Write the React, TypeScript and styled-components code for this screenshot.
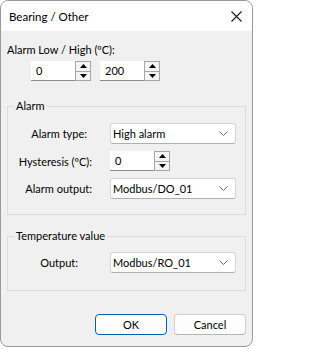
import React from "react";
import styled, { createGlobalStyle } from "styled-components";

const GlobalStyle = createGlobalStyle`
    html, body {
        margin: 0;
        padding: 0;
        background: #ffffff;
    }
    body {
        font-family: Lato, "Liberation Sans", sans-serif;
        font-size: 11px;
        color: #000000;
    }
`;

interface SpinBoxProps {
    value: string;
    width?: number;
}

const SpinBox: React.FC<SpinBoxProps> = ({ value, width = 44 }) => (
    <SpinWrap>
        <SpinField style={{ width }}>{value}</SpinField>
        <Spinner>
            <SpinHalf>
                <Arrow viewBox="0 0 7 4">
                    <path d="M3.5 0 L7 4 L0 4 Z" />
                </Arrow>
            </SpinHalf>
            <SpinHalf>
                <Arrow viewBox="0 0 7 4">
                    <path d="M0 0 L7 0 L3.5 4 Z" />
                </Arrow>
            </SpinHalf>
        </Spinner>
    </SpinWrap>
);

const Combo: React.FC<{ value: string }> = ({ value }) => (
    <ComboBox>
        <span>{value}</span>
        <svg width="9" height="5" viewBox="0 0 9 5">
            <path d="M0.5 0.5 L4.5 4.5 L8.5 0.5" fill="none" stroke="#6a6a6a" strokeWidth="1" />
        </svg>
    </ComboBox>
);

const App: React.FC = () => {
    return (
        <>
            <GlobalStyle />
            <Window>
                <TitleBar>
                    <Title>Bearing / Other</Title>
                    <CloseButton>
                        <svg width="11" height="11" viewBox="0 0 11 11">
                            <path d="M0.5 0.5 L10.5 10.5 M10.5 0.5 L0.5 10.5" stroke="#1a1a1a" strokeWidth="1.1" />
                        </svg>
                    </CloseButton>
                </TitleBar>
                <Body>
                    <Heading>Alarm Low / High (ºC):</Heading>
                    <SpinRow>
                        <SpinBox value="0" />
                        <SpinBox value="200" />
                    </SpinRow>

                    <Group $top={9} $bottom={15}>
                        <Legend>Alarm</Legend>
                        <FormGrid>
                            <FieldLabel $pad={5}>Alarm type:</FieldLabel>
                            <Combo value="High alarm" />
                            <FieldLabel>Hysteresis (ºC):</FieldLabel>
                            <SpinBox value="0" />
                            <FieldLabel>Alarm output:</FieldLabel>
                            <Combo value="Modbus/DO_01" />
                        </FormGrid>
                    </Group>

                    <Group $top={8} $bottom={17} $gap={13}>
                        <Legend>Temperature value</Legend>
                        <FormGrid>
                            <FieldLabel $pad={14}>Output:</FieldLabel>
                            <Combo value="Modbus/RO_01" />
                        </FormGrid>
                    </Group>

                    <ButtonRow>
                        <DialogButton $primary>OK</DialogButton>
                        <DialogButton>Cancel</DialogButton>
                    </ButtonRow>
                </Body>
            </Window>
        </>
    );
};

export default App;

// styles
const Window = styled.div`
    width: 253px;
    height: 347px;
    box-sizing: border-box;
    border: 1px solid #9a9a9a;
    border-radius: 8px;
    overflow: hidden;
    display: flex;
    flex-direction: column;
    background: #f0f0f0;
`;

const TitleBar = styled.div`
    height: 30px;
    background: #ffffff;
    display: flex;
    align-items: center;
    justify-content: space-between;
    padding-left: 8px;
`;

const Title = styled.span`
    font-size: 11.5px;
    line-height: 16px;
    margin-top: 1px;
`;

const CloseButton = styled.div`
    width: 31px;
    height: 30px;
    display: flex;
    align-items: center;
    justify-content: center;
`;

const Body = styled.div`
    flex: 1;
    display: flex;
    flex-direction: column;
    padding: 11px 6px 0 6px;
`;

const Heading = styled.div`
    line-height: 16px;
`;

const SpinRow = styled.div`
    display: flex;
    gap: 9px;
    margin: 3px 0 0 24px;
`;

const SpinWrap = styled.div`
    display: flex;
    height: 20px;
`;

const SpinField = styled.div`
    box-sizing: border-box;
    height: 20px;
    background: #ffffff;
    border-bottom: 1px solid #8d8d8d;
    padding-left: 5px;
    line-height: 19px;
`;

const Spinner = styled.div`
    width: 16px;
    box-sizing: border-box;
    border: 1px solid #a6a6a6;
    display: flex;
    flex-direction: column;
    background: #a6a6a6;
    gap: 1px;
`;

const SpinHalf = styled.div`
    flex: 1;
    background: #f4f4f4;
    display: flex;
    align-items: center;
    justify-content: center;
`;

const Arrow = styled.svg`
    width: 7px;
    height: 4px;
    fill: #000000;
`;

const Group = styled.fieldset<{ $top: number; $bottom: number; $gap?: number }>`
    margin: ${(p) => p.$gap ?? 17}px 0 0 0;
    padding: ${(p) => p.$top}px 9px ${(p) => p.$bottom}px 0;
    border: 1px solid #dcdcdc;
    min-width: 0;
`;

const Legend = styled.legend`
    margin-left: 6px;
    padding: 0 2px;
    line-height: 16px;
`;

const FormGrid = styled.div`
    display: grid;
    grid-template-columns: 84px 126px;
    column-gap: 18px;
    row-gap: 7px;
    align-items: center;
`;

const FieldLabel = styled.span<{ $pad?: number }>`
    text-align: right;
    padding-right: ${(p) => p.$pad ?? 0}px;
    white-space: nowrap;
`;

const ComboBox = styled.div`
    box-sizing: border-box;
    height: 21px;
    background: #ffffff;
    border: 1px solid #d5d5d5;
    border-bottom-color: #b0b0b0;
    border-radius: 3px;
    display: flex;
    align-items: center;
    justify-content: space-between;
    padding: 0 7px 0 2px;
`;

const ButtonRow = styled.div`
    display: flex;
    justify-content: flex-end;
    gap: 7px;
    margin-top: 23px;
`;

const DialogButton = styled.div<{ $primary?: boolean }>`
    box-sizing: border-box;
    width: 72px;
    height: 21px;
    background: #fdfdfd;
    border: 1px solid ${(p) => (p.$primary ? "#005fb8" : "#d0d0d0")};
    border-bottom-color: ${(p) => (p.$primary ? "#005fb8" : "#b5b5b5")};
    border-radius: 4px;
    display: flex;
    align-items: center;
    justify-content: center;
`;
